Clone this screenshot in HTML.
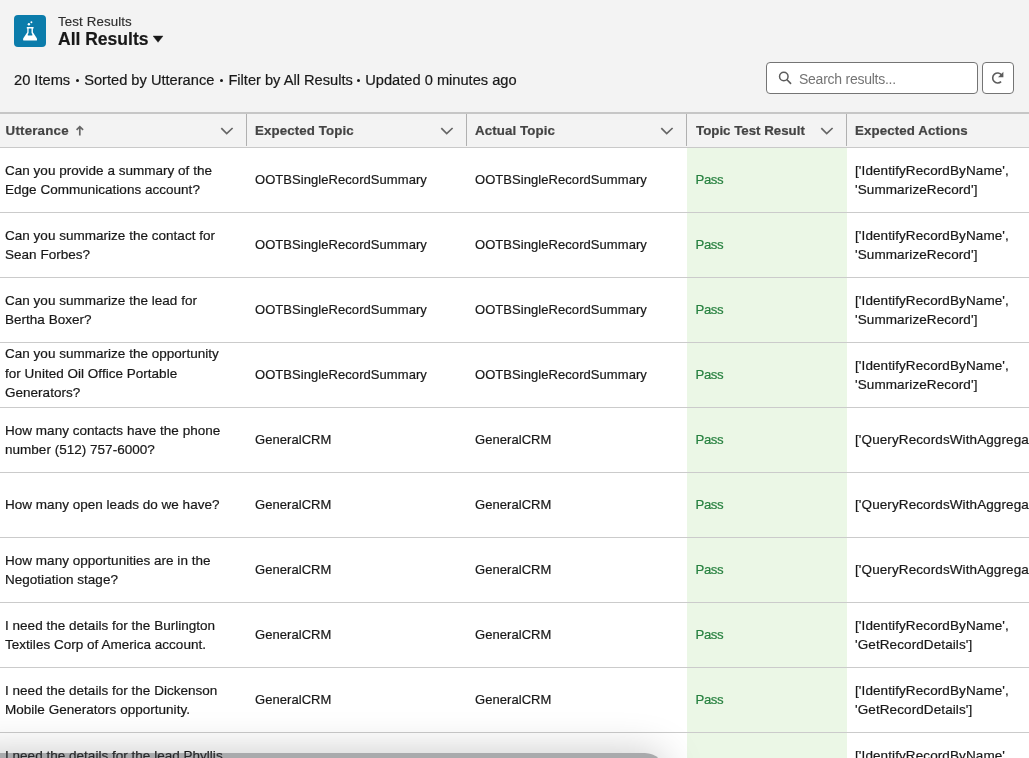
<!DOCTYPE html>
<html><head><meta charset="utf-8">
<style>
*{box-sizing:border-box;margin:0;padding:0}
html,body{-webkit-font-smoothing:antialiased;width:1029px;height:758px;overflow:hidden;background:#f3f3f3;font-family:"Liberation Sans",sans-serif;color:#181818}
.abs{position:absolute}
#icon{left:14px;top:15px;width:32px;height:32px;border-radius:4px;background:#0b7cab}
#icon svg{position:absolute;left:0;top:0}
#t1{-webkit-text-stroke:0.15px currentColor;left:58px;top:14px;font-size:13.3px;letter-spacing:0.12px;line-height:15px;color:#2e2e2e;white-space:nowrap}
#t2{-webkit-text-stroke:0.2px currentColor;left:58px;top:29px;font-size:17.5px;line-height:20px;font-weight:bold;color:#181818;white-space:nowrap}
#tri{left:153px;top:35px}
#meta{left:14px;top:71px;font-size:14.65px;-webkit-text-stroke:0.2px currentColor;line-height:18px;color:#181818;white-space:nowrap}
.dot{display:inline-block;width:3px;height:3px;border-radius:50%;background:#181818;vertical-align:middle;margin:0 5.5px 0 5.5px;position:relative;top:-1px}
#search{left:766px;top:62px;width:212px;height:32px;border:1px solid #747474;border-radius:4px;background:#fff}
#search span{position:absolute;left:32px;top:7.6px;font-size:14px;letter-spacing:-0.25px;line-height:16px;color:#747474;white-space:nowrap}
#search svg{position:absolute;left:0;top:0}
#refresh{left:982px;top:62px;width:32px;height:32px;border:1px solid #747474;border-radius:4px;background:#fff}
#refresh svg{position:absolute;left:-1px;top:-1px}
#topline{left:0;top:112px;width:1029px;height:2px;background:#c6c6c6}
#hdr{left:0;top:114px;width:1029px;height:34px;background:#f3f3f3;border-bottom:1px solid #c9c9c9}
.th{position:absolute;top:0px;letter-spacing:0.1px;-webkit-text-stroke:0.2px currentColor;height:34px;font-size:13.3px;font-weight:bold;color:#444;line-height:34px;white-space:nowrap}
.div{position:absolute;top:0px;width:1px;height:32px;background:#b0b0b0}
.chev{position:absolute;top:-1px}
.row{position:absolute;left:0;width:1029px;height:65px;background:#fff;border-bottom:1px solid #cbcbcb}
.c{position:absolute;top:0;height:64px;display:flex;align-items:center;font-size:13.5px;line-height:19.5px;color:#181818;white-space:nowrap;-webkit-text-stroke:0.2px currentColor}
.c1{left:5px;width:235px;letter-spacing:0.02px}
.c2{left:255px;font-size:13px;letter-spacing:0.06px}
.c3{left:475px;font-size:13px;letter-spacing:0.06px}
.c4{left:687px;width:160px;background:#ebf7e6;padding-left:8.5px;color:#26803f;font-size:13.2px;letter-spacing:-0.4px}
.c5{left:855px;white-space:nowrap;letter-spacing:0.1px}
#dock{left:-40px;top:753px;width:705px;height:60px;border-radius:20px;background:rgba(60,62,66,0.44);box-shadow:0 0 40px 0px rgba(0,0,0,0.22);filter:blur(0.5px)}
</style></head>
<body><div id="wrap" style="position:absolute;left:0;top:0;width:1029px;height:758px;will-change:transform">
<div id="icon" class="abs"><svg width="32" height="32" viewBox="0 0 32 32"><g fill="#fff"><circle cx="17.4" cy="7.3" r="0.95"/><circle cx="14.9" cy="9.3" r="1.2"/><path fill-rule="evenodd" d="M12.8 12 H19.6 V13.5 H18.9 V17.3 L22.8 23.2 Q23.3 24.1 22.9 25.4 H9.3 Q8.8 24.1 9.3 23.2 L13.3 17.3 V13.5 H12.8 Z M14.6 13.6 H17.5 V18 L18.3 19.2 V20.4 H13.8 V19.2 L14.6 18 Z"/></g></svg></div>
<div id="t1" class="abs">Test Results</div>
<div id="t2" class="abs">All Results</div>
<svg id="tri" class="abs" width="11" height="8" viewBox="0 0 11 8"><path d="M0.1 1.0 L10 1.0 L5.05 7.3 Z" fill="#181818" stroke="#181818" stroke-width="0.4" stroke-linejoin="round"/></svg>
<div id="meta" class="abs">20 Items<span class="dot"></span>Sorted by Utterance<span class="dot"></span>Filter by All Results<span class="dot" style="margin:0 4.8px 0 4.6px"></span>Updated 0 minutes ago</div>
<div id="search" class="abs"><svg width="40" height="32" viewBox="-1 -1 40 32" style="left:-1px;top:-1px"><circle cx="16.8" cy="13.45" r="4.25" fill="none" stroke="#5c5c5c" stroke-width="1.5"/><path d="M20.0 16.7 L23.6 20.4" stroke="#5c5c5c" stroke-width="1.6" stroke-linecap="round"/></svg><span>Search results...</span></div>
<div id="refresh" class="abs"><svg width="32" height="32" viewBox="0 0 32 32"><path d="M19.1 19.7 A5.0 5.0 0 1 1 19.6 12.9" fill="none" stroke="#5c5c5c" stroke-width="1.6"/><path d="M21.4 9.8 V15.3 H16 Z" fill="#5c5c5c"/></svg></div>
<div id="topline" class="abs"></div>
<div id="hdr" class="abs">
  <div class="th" style="left:5.6px;letter-spacing:0.2px">Utterance</div>
  <div class="div" style="left:246px"></div>
  <div class="th" style="left:255px">Expected Topic</div>
  <div class="div" style="left:466px"></div>
  <div class="th" style="left:475px">Actual Topic</div>
  <div class="div" style="left:686px"></div>
  <div class="th" style="left:696px;letter-spacing:0px">Topic Test Result</div>
  <div class="div" style="left:846px"></div>
  <div class="th" style="left:855px">Expected Actions</div>
<svg class="chev" style="left:216px" width="30" height="34" viewBox="216 0 30 34"><path d="M221.3 15.2 L226.7 20.6 L232.6 15.0" fill="none" stroke="#666" stroke-width="1.7"/></svg><svg class="chev" style="left:436px" width="30" height="34" viewBox="436 0 30 34"><path d="M441.3 15.2 L446.7 20.6 L452.6 15.0" fill="none" stroke="#666" stroke-width="1.7"/></svg><svg class="chev" style="left:656px" width="30" height="34" viewBox="656 0 30 34"><path d="M661.3 15.2 L666.7 20.6 L672.6 15.0" fill="none" stroke="#666" stroke-width="1.7"/></svg><svg class="chev" style="left:816px" width="30" height="34" viewBox="816 0 30 34"><path d="M821.3 15.2 L826.7 20.6 L832.6 15.0" fill="none" stroke="#666" stroke-width="1.7"/></svg><svg class="chev" style="left:70px" width="20" height="34" viewBox="70 0 20 34"><path d="M79.8 13.8 V22.6 M76.6 16.8 L79.8 13.6 L83.1 16.8" fill="none" stroke="#666" stroke-width="1.7"/></svg>
</div>
<div class="row" style="top:148px"><div class="c c1">Can you provide a summary of the<br>Edge Communications account?</div><div class="c c2">OOTBSingleRecordSummary</div><div class="c c3">OOTBSingleRecordSummary</div><div class="c c4">Pass</div><div class="c c5">['IdentifyRecordByName',<br>'SummarizeRecord']</div></div>
<div class="row" style="top:213px"><div class="c c1">Can you summarize the contact for<br>Sean Forbes?</div><div class="c c2">OOTBSingleRecordSummary</div><div class="c c3">OOTBSingleRecordSummary</div><div class="c c4">Pass</div><div class="c c5">['IdentifyRecordByName',<br>'SummarizeRecord']</div></div>
<div class="row" style="top:278px"><div class="c c1">Can you summarize the lead for<br>Bertha Boxer?</div><div class="c c2">OOTBSingleRecordSummary</div><div class="c c3">OOTBSingleRecordSummary</div><div class="c c4">Pass</div><div class="c c5">['IdentifyRecordByName',<br>'SummarizeRecord']</div></div>
<div class="row" style="top:343px"><div class="c c1" style="top:-1.6px">Can you summarize the opportunity<br>for United Oil Office Portable<br>Generators?</div><div class="c c2">OOTBSingleRecordSummary</div><div class="c c3">OOTBSingleRecordSummary</div><div class="c c4">Pass</div><div class="c c5">['IdentifyRecordByName',<br>'SummarizeRecord']</div></div>
<div class="row" style="top:408px"><div class="c c1">How many contacts have the phone<br>number (512) 757-6000?</div><div class="c c2">GeneralCRM</div><div class="c c3">GeneralCRM</div><div class="c c4">Pass</div><div class="c c5">['QueryRecordsWithAggregate']</div></div>
<div class="row" style="top:473px"><div class="c c1">How many open leads do we have?</div><div class="c c2">GeneralCRM</div><div class="c c3">GeneralCRM</div><div class="c c4">Pass</div><div class="c c5">['QueryRecordsWithAggregate']</div></div>
<div class="row" style="top:538px"><div class="c c1">How many opportunities are in the<br>Negotiation stage?</div><div class="c c2">GeneralCRM</div><div class="c c3">GeneralCRM</div><div class="c c4">Pass</div><div class="c c5">['QueryRecordsWithAggregate']</div></div>
<div class="row" style="top:603px"><div class="c c1">I need the details for the Burlington<br>Textiles Corp of America account.</div><div class="c c2">GeneralCRM</div><div class="c c3">GeneralCRM</div><div class="c c4">Pass</div><div class="c c5">['IdentifyRecordByName',<br>'GetRecordDetails']</div></div>
<div class="row" style="top:668px"><div class="c c1">I need the details for the Dickenson<br>Mobile Generators opportunity.</div><div class="c c2">GeneralCRM</div><div class="c c3">GeneralCRM</div><div class="c c4">Pass</div><div class="c c5">['IdentifyRecordByName',<br>'GetRecordDetails']</div></div>
<div class="row" style="top:733px"><div class="c c1">I need the details for the lead Phyllis<br>Cotton?</div><div class="c c2">GeneralCRM</div><div class="c c3">GeneralCRM</div><div class="c c4">Pass</div><div class="c c5">['IdentifyRecordByName',<br>'GetRecordDetails']</div></div>
<div id="dock" class="abs"></div>
</div></body></html>
